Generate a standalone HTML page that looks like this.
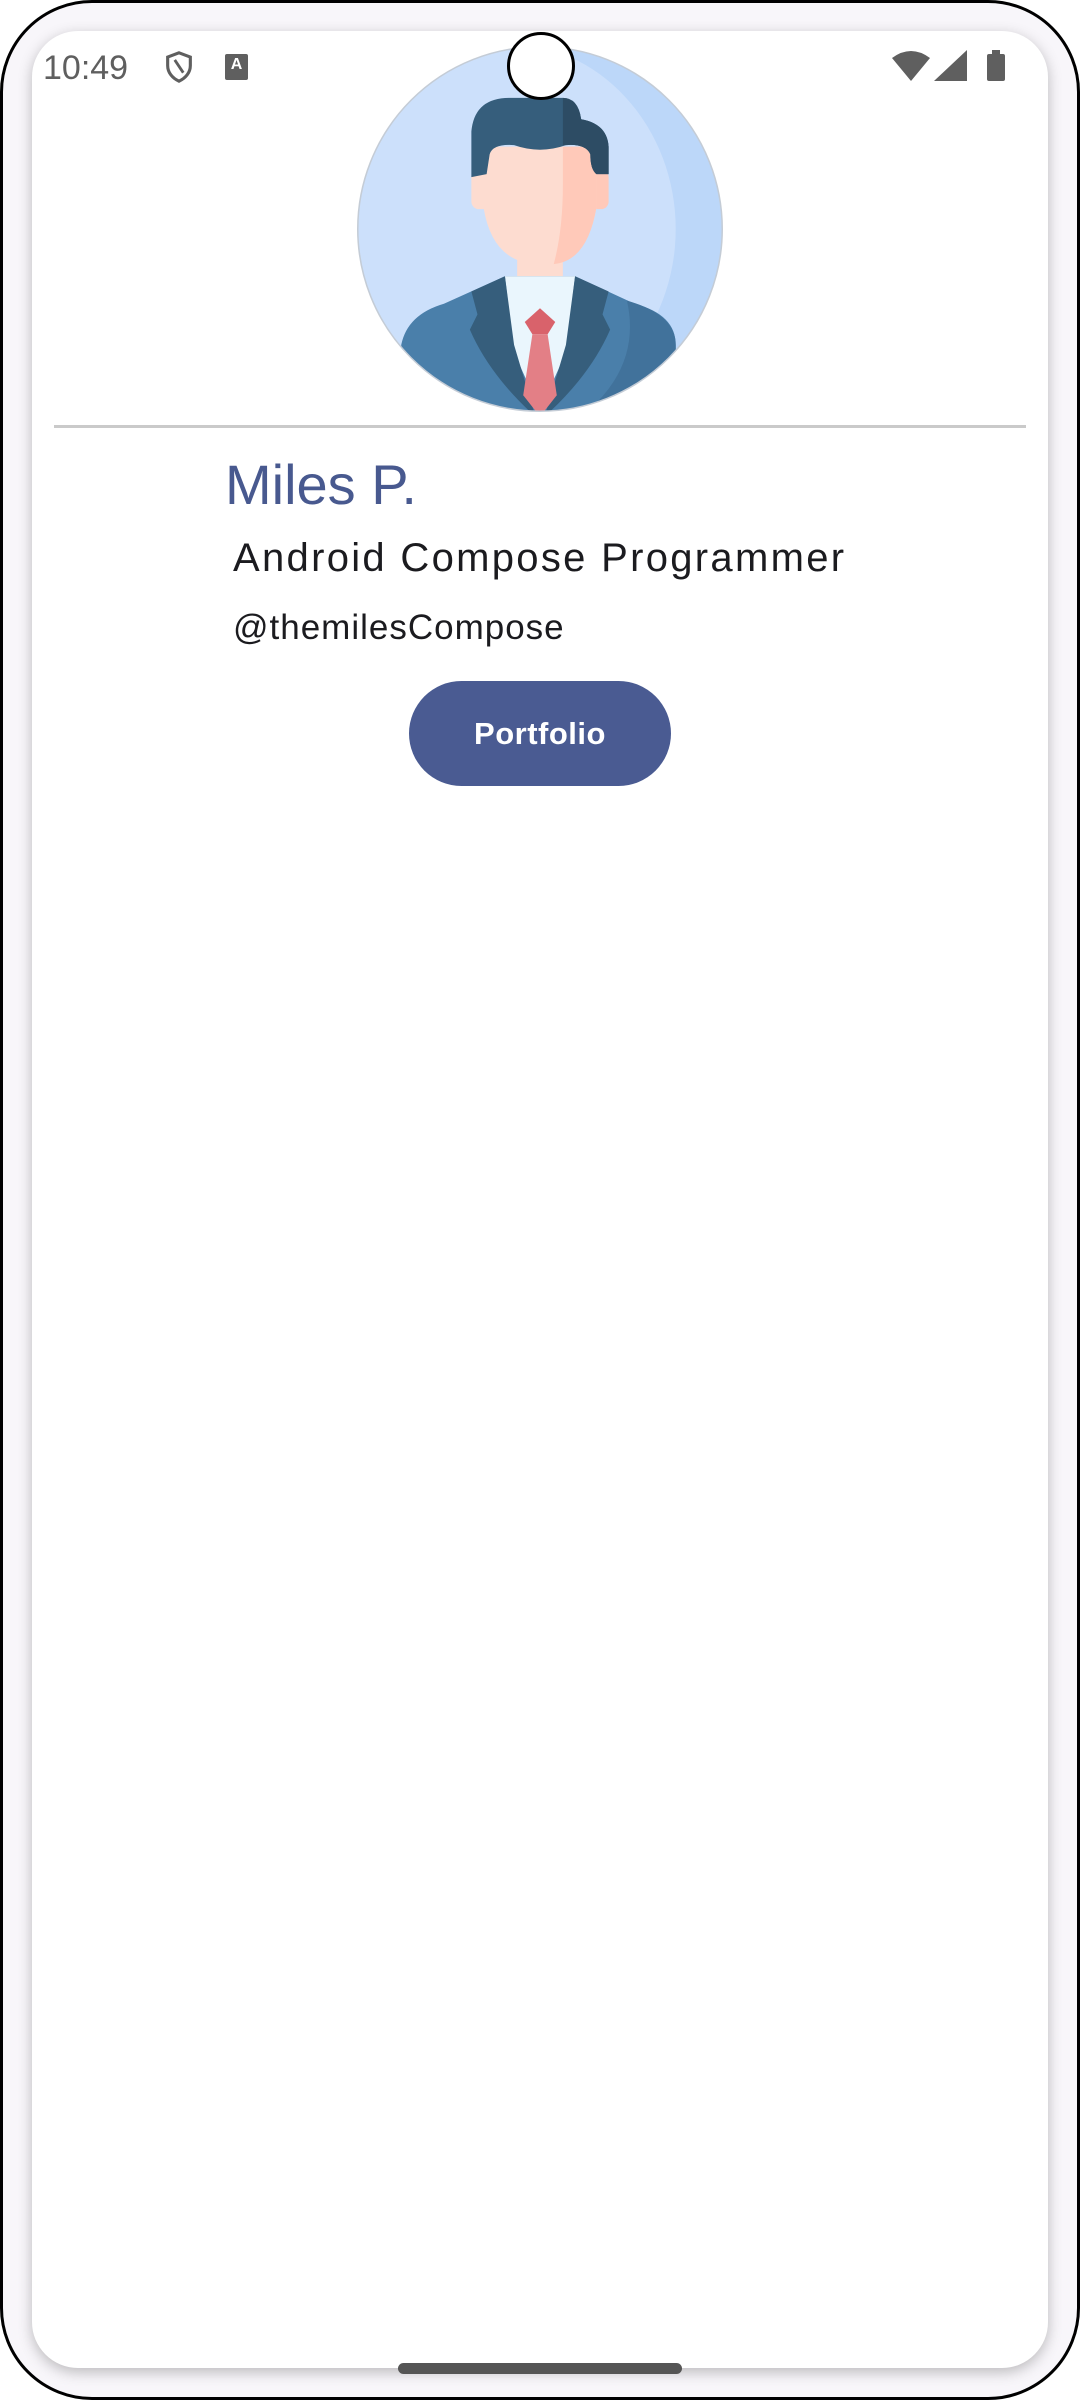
<!DOCTYPE html>
<html><head><meta charset="utf-8"><style>
html,body{margin:0;padding:0;width:1080px;height:2400px;overflow:hidden;background:#fff}
.frame{position:absolute;left:0;top:0;width:1074px;height:2394px;border:3px solid #000;border-radius:92px;background:#f8f6fa;overflow:hidden}
.screen{position:absolute;left:32px;top:31px;width:1016px;height:2337px;background:#fff;border-radius:46px;box-shadow:0 4px 14px rgba(0,0,0,0.25)}
.t{position:absolute;font-family:"Liberation Sans",sans-serif;white-space:nowrap}
</style></head><body>
<div class="frame"></div>
<div class="screen"></div>
<div class="t" style="left:43px;top:49px;font-size:34px;color:#5f5f5f">10:49</div>
<svg style="position:absolute;left:162px;top:50px" width="34" height="34" viewBox="0 0 24 24"><path d="M12 2 L20 5 V11 C20 16 16.5 20 12 22 C7.5 20 4 16 4 11 V5 Z" fill="none" stroke="#5f5f5f" stroke-width="2.2"/><path d="M9 7 L15 16" stroke="#5f5f5f" stroke-width="2"/></svg>
<div style="position:absolute;left:225px;top:54px;width:23px;height:26px;background:#5f5f5f;border-radius:2px;color:#fff;font:bold 16px 'Liberation Sans',sans-serif;text-align:center;line-height:22px">A</div>
<svg style="position:absolute;left:890px;top:48px" width="120" height="34" viewBox="0 0 120 34"><path d="M2 10 Q21 -4 40 10 L21 33 Z" fill="#5f5f5f"/><path d="M44 33 L77 2 L77 33 Z" fill="#5f5f5f"/><rect x="97" y="6" width="18" height="27" rx="2" fill="#5f5f5f"/><rect x="102" y="2" width="8" height="5" fill="#5f5f5f"/></svg>
<svg style="position:absolute;left:357px;top:46px" width="366" height="366" viewBox="233 29 240 240">
<defs><clipPath id="c"><circle cx="353" cy="149" r="119.5"/></clipPath></defs>
<g clip-path="url(#c)">
<rect x="230" y="25" width="250" height="250" fill="#bcd7f9"/>
<ellipse cx="330" cy="149" rx="112" ry="122" fill="#cce0fb"/>
<path d="M338 155 L368 155 L368 182 L353 202 L338 182 Z" fill="#fddcd0"/>
<path d="M262 272 L262 225 Q266 205 290 198 L330 180 L376 180 L415 198 Q442 205 442 225 L442 272 Z" fill="#4a7faa"/>
<path d="M410 196 Q442 205 442 225 L442 272 L380 272 Q420 240 410 196 Z" fill="#41729b"/>
<path d="M330 180 L376 180 L370 230 L353 268 L336 230 Z" fill="#eaf6fd"/>
<path d="M330 180 L308 190 L312 205 L307 215 Q320 245 350 272 L336 225 Z" fill="#365e7c"/>
<path d="M376 180 L398 190 L394 205 L399 215 Q386 245 356 272 L370 225 Z" fill="#365e7c"/>
<path d="M343 210 L353 201 L363 210 L358 218 L348 218 Z" fill="#d9626b"/>
<path d="M348 218 L358 218 L364 258 L353 272 L342 258 Z" fill="#e37f86"/>
<rect x="308" y="110" width="14" height="26" rx="5" fill="#fddcd0"/>
<rect x="384" y="110" width="14" height="26" rx="5" fill="#ffc9b9"/>
<path d="M316 95 L316 135 Q322 172 353 172 Q384 172 390 135 L390 95 Z" fill="#fddcd0"/>
<path d="M368 95 L390 95 L390 135 Q384 170 362 172 Q368 150 368 120 Z" fill="#ffc9b9"/>
<path d="M308 115 L308 85 Q310 63 333 63 L368 63 Q378 63 380 77 Q397 80 398 95 L398 113 L390 113 Q386 110 386 100 Q383 93 370 94 Q353 100 336 94 Q322 93 320 100 L318 113 Z" fill="#365e7c"/>
<path d="M368 63 Q378 63 380 77 Q397 80 398 95 L398 113 L390 113 Q386 110 386 100 Q383 93 370 94 L368 94 Z" fill="#2d4c64"/>
</g>
<circle cx="353" cy="149" r="119.5" fill="none" stroke="#c4ccd6" stroke-width="1"/>
</svg>
<div style="position:absolute;left:507px;top:32px;width:62px;height:62px;border:3px solid #000;border-radius:50%;background:#fff"></div>
<div style="position:absolute;left:54px;top:425px;width:972px;height:3px;background:#cacaca"></div>
<div class="t" style="left:225px;top:452px;font-size:56px;color:#48598f">Miles P.</div>
<div class="t" style="left:233px;top:536px;font-size:40px;color:#1b1b1f;letter-spacing:2.3px">Android Compose Programmer</div>
<div class="t" style="left:233px;top:608px;font-size:35px;color:#1b1b1f;letter-spacing:1px">@themilesCompose</div>
<div style="position:absolute;left:409px;top:681px;width:262px;height:105px;border-radius:53px;background:#4a5b92;color:#fff;font:bold 31px 'Liberation Sans',sans-serif;text-align:center;line-height:105px;letter-spacing:0.5px">Portfolio</div>
<div style="position:absolute;left:398px;top:2363px;width:284px;height:11px;border-radius:6px;background:#555"></div>
</body></html>
